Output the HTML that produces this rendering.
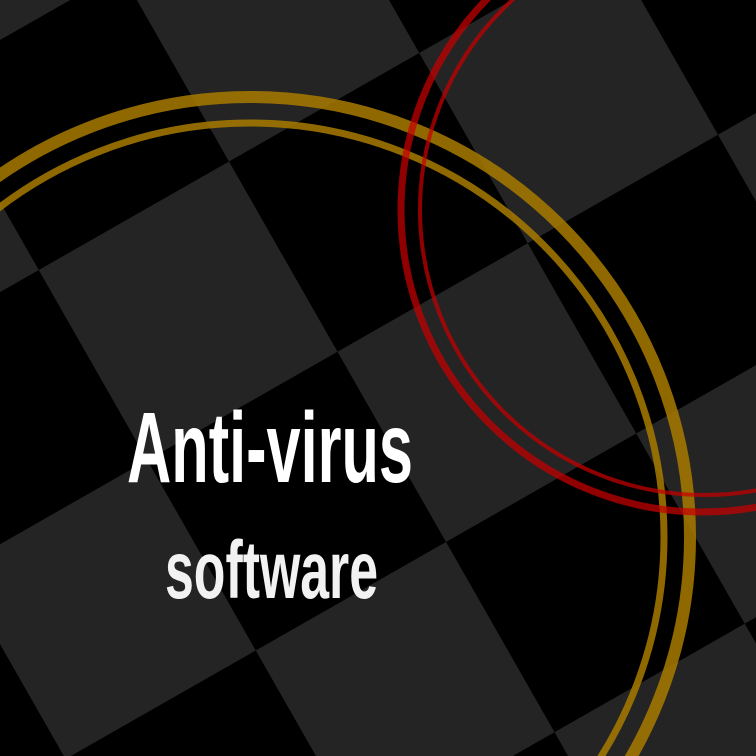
<!DOCTYPE html>
<html><head><style>html,body{margin:0;padding:0;background:#000;overflow:hidden;width:756px;height:756px}svg{display:block}</style></head>
<body>
<svg width="756" height="756" viewBox="0 0 756 756" xmlns="http://www.w3.org/2000/svg">
<defs>
<pattern id="chk" patternUnits="userSpaceOnUse" width="438" height="438" patternTransform="translate(229,161.5) rotate(-29.7)">
<rect width="438" height="438" fill="#000"/>
<rect x="219" y="0" width="219" height="219" fill="#242424"/>
<rect x="0" y="219" width="219" height="219" fill="#242424"/>
</pattern>
</defs>
<rect width="756" height="756" fill="url(#chk)"/>
<g fill="none" opacity="0.85">
<circle cx="250" cy="537" r="440" stroke="#a87c00" stroke-width="12"/>
<circle cx="250" cy="537" r="414" stroke="#a87c00" stroke-width="7"/>
</g>
<g fill="none" opacity="0.72">
<circle cx="703" cy="210" r="302" stroke="#c80000" stroke-width="7"/>
<circle cx="705" cy="210" r="285" stroke="#c80000" stroke-width="4"/>
</g>
<text x="127" y="482" font-family="Liberation Sans, sans-serif" font-weight="bold" font-size="100" fill="#fff" textLength="286" lengthAdjust="spacingAndGlyphs">Anti-virus</text>
<text x="165" y="598" font-family="Liberation Sans, sans-serif" font-weight="bold" font-size="82" fill="#f2f2f2" textLength="213" lengthAdjust="spacingAndGlyphs">software</text>
</svg>
</body></html>
